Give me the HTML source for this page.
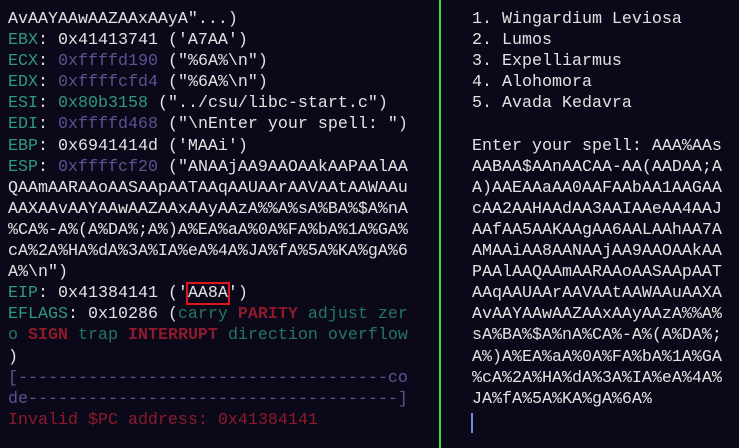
<!DOCTYPE html>
<html><head><style>
html,body{margin:0;padding:0;background:#0b0919;width:739px;height:448px;overflow:hidden}
pre{margin:0;font-family:"Liberation Mono","DejaVu Sans Mono",monospace;font-size:16.67px;line-height:21.1px;color:#e2e2e2;position:absolute;top:9px;white-space:pre}
#l{left:8px}
#r{left:472px}
.g{color:#2f9a7c}.p{color:#5b5394}.t{color:#24785f}.R{color:#8c1a2c;font-weight:bold}.r{color:#8c1a2c}
.box{outline:2px solid #e0161c;outline-offset:0}
#div{position:absolute;left:439px;top:0;width:2px;height:448px;background:#33e02a}
#cur{position:absolute;left:471px;top:413px;width:2px;height:20px;background:#7b86e0}
</style></head><body>
<pre id="l">AvAAYAAwAAZAAxAAyA"...)
<span class="g">EBX</span>: 0x41413741 ('A7AA')
<span class="g">ECX</span>: <span class="p">0xffffd190</span> ("%6A%\n")
<span class="g">EDX</span>: <span class="p">0xffffcfd4</span> ("%6A%\n")
<span class="g">ESI</span>: <span class="g">0x80b3158</span> ("../csu/libc-start.c")
<span class="g">EDI</span>: <span class="p">0xffffd468</span> ("\nEnter your spell: ")
<span class="g">EBP</span>: 0x6941414d ('MAAi')
<span class="g">ESP</span>: <span class="p">0xffffcf20</span> ("ANAAjAA9AAOAAkAAPAAlAA
QAAmAARAAoAASAApAATAAqAAUAArAAVAAtAAWAAu
AAXAAvAAYAAwAAZAAxAAyAAzA%%A%sA%BA%$A%nA
%CA%-A%(A%DA%;A%)A%EA%aA%0A%FA%bA%1A%GA%
cA%2A%HA%dA%3A%IA%eA%4A%JA%fA%5A%KA%gA%6
A%\n")
<span class="g">EIP</span>: 0x41384141 ('<span class="box">AA8A</span>')
<span class="g">EFLAGS</span>: 0x10286 (<span class="t">carry</span> <span class="R">PARITY</span> <span class="t">adjust zer</span>
<span class="t">o</span> <span class="R">SIGN</span> <span class="t">trap</span> <span class="R">INTERRUPT</span> <span class="t">direction overflow</span>
)
<span class="p">[-------------------------------------co</span>
<span class="p">de-------------------------------------]</span>
<span class="r">Invalid $PC address: 0x41384141</span></pre>
<div id="div"></div>
<pre id="r">1. Wingardium Leviosa
2. Lumos
3. Expelliarmus
4. Alohomora
5. Avada Kedavra

Enter your spell: AAA%AAs
AABAA$AAnAACAA-AA(AADAA;A
A)AAEAAaAA0AAFAAbAA1AAGAA
cAA2AAHAAdAA3AAIAAeAA4AAJ
AAfAA5AAKAAgAA6AALAAhAA7A
AMAAiAA8AANAAjAA9AAOAAkAA
PAAlAAQAAmAARAAoAASAApAAT
AAqAAUAArAAVAAtAAWAAuAAXA
AvAAYAAwAAZAAxAAyAAzA%%A%
sA%BA%$A%nA%CA%-A%(A%DA%;
A%)A%EA%aA%0A%FA%bA%1A%GA
%cA%2A%HA%dA%3A%IA%eA%4A%
JA%fA%5A%KA%gA%6A%</pre>
<div id="cur"></div>
</body></html>
